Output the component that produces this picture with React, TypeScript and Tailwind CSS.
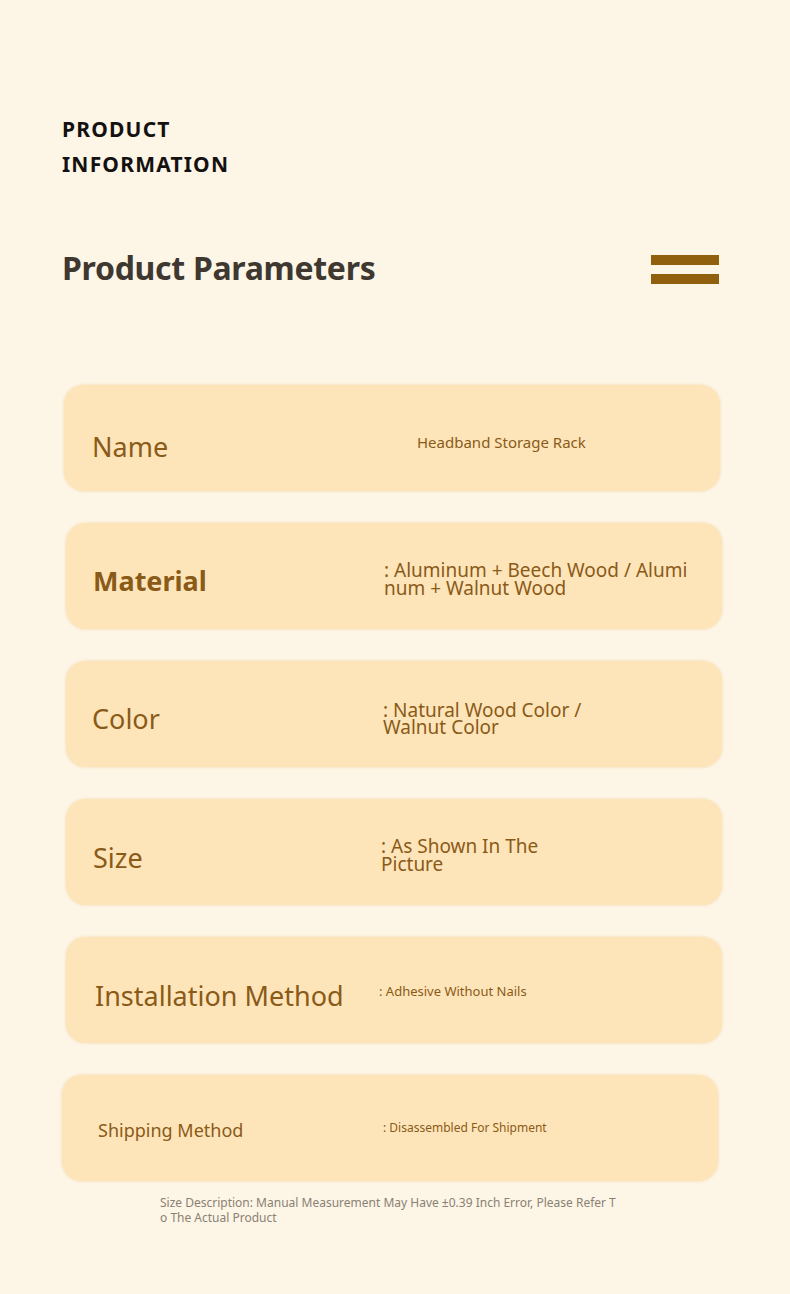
import React from "react";

type Row = {
  label: string;
  value: React.ReactNode;
  card: string;
  labelCls: string;
  valueCls: string;
};

const rows: Row[] = [
  {
    label: "Name",
    value: "Headband Storage Rack",
    card: "ml-[64px]",
    labelCls: "pl-[28px] pt-[18px] w-[353px] text-[27px]",
    valueCls: "pt-[8px] text-[15px]",
  },
  {
    label: "Material",
    value: (
      <>
        : Aluminum + Beech Wood / Alumi
        <br />
        num + Walnut Wood
      </>
    ),
    card: "ml-[66px]",
    labelCls: "pl-[27px] pt-[10px] w-[318px] text-[27px] font-bold",
    valueCls: "pt-[6px] text-[19px] leading-[18px]",
  },
  {
    label: "Color",
    value: (
      <>
        : Natural Wood Color /
        <br />
        Walnut Color
      </>
    ),
    card: "ml-[66px]",
    labelCls: "pl-[26px] pt-[10px] w-[317px] text-[27px]",
    valueCls: "pt-[10px] text-[19px] leading-[17px]",
  },
  {
    label: "Size",
    value: (
      <>
        : As Shown In The
        <br />
        Picture
      </>
    ),
    card: "ml-[66px]",
    labelCls: "pl-[27px] pt-[12px] w-[315px] text-[27px]",
    valueCls: "pt-[6px] text-[19px] leading-[18px]",
  },
  {
    label: "Installation Method",
    value: ": Adhesive Without Nails",
    card: "ml-[66px]",
    labelCls: "pl-[29px] pt-[12px] w-[313px] text-[27px]",
    valueCls: "pt-[4px] text-[13px]",
  },
  {
    label: "Shipping Method",
    value: ": Disassembled For Shipment",
    card: "ml-[62px]",
    labelCls: "pl-[36px] pt-[4px] w-[321px] text-[18px]",
    valueCls: "pt-[0px] text-[12px]",
  },
];

function ParamCard({ row }: { row: Row }) {
  return (
    <div
      className={`${row.card} w-[656px] h-[106px] rounded-[20px] bg-[#fde5b9] shadow-[0_0_3px_rgba(240,215,165,0.9)] flex items-center`}
    >
      <div className={`${row.labelCls} text-[#8a5a18] shrink-0`}>{row.label}</div>
      <div className={`${row.valueCls} text-[#8a5a18]`}>{row.value}</div>
    </div>
  );
}

export default function App() {
  return (
    <div
      className="w-[790px] min-h-[1294px] bg-[#fdf5e6] pt-[112px]"
      style={{ fontFamily: '"Noto Sans", "Open Sans", sans-serif' }}
    >
      {/* Header */}
      <div className="pl-[62px] text-[21px] font-bold tracking-[1.2px] leading-[35px] text-[#141210]">
        <div>PRODUCT</div>
        <div>INFORMATION</div>
      </div>

      <div className="flex items-center justify-between pl-[62px] pr-[71px] mt-[62px]">
        <h2 className="text-[32px] font-bold text-[#3e3831] tracking-[-0.3px]">
          Product Parameters
        </h2>
        <div className="flex flex-col gap-[9px] pt-[3px]">
          <div className="w-[68px] h-[10px] bg-[#91600f]" />
          <div className="w-[68px] h-[10px] bg-[#91600f]" />
        </div>
      </div>

      {/* Cards */}
      <div className="mt-[93px] flex flex-col gap-[32px]">
        {rows.map((r) => (
          <ParamCard key={r.label} row={r} />
        ))}
      </div>

      <p className="pl-[160px] pt-[14px] text-[12px] leading-[15px] text-[#8a8174]">
        Size Description: Manual Measurement May Have ±0.39 Inch Error, Please Refer T
        <br />o The Actual Product
      </p>
    </div>
  );
}
